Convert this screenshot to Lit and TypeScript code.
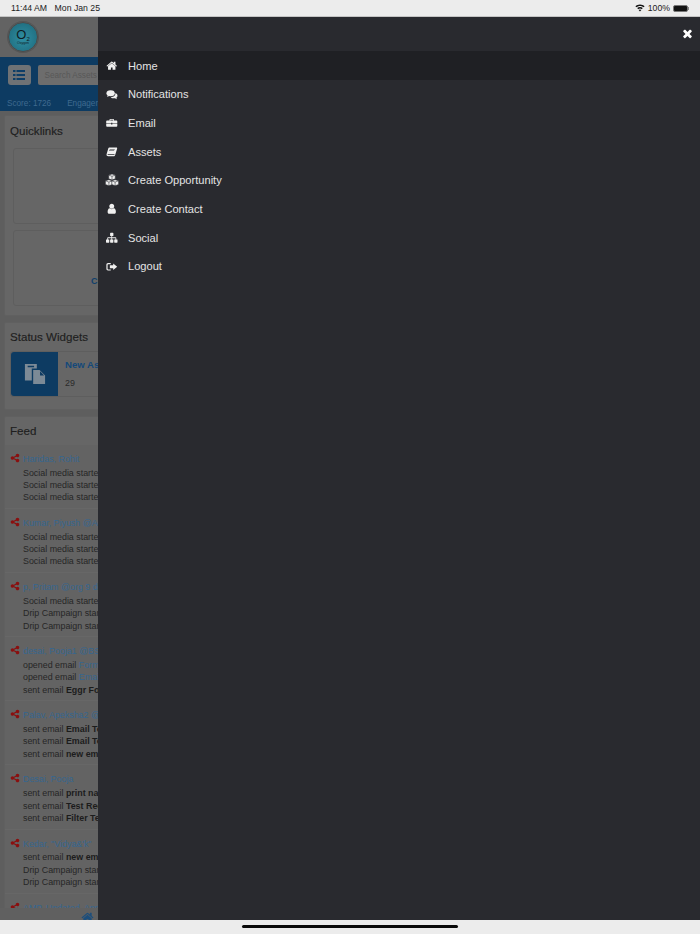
import { LitElement, html, css, svg } from "lit";
import { customElement } from "lit/decorators.js";

const icons: Record<string, any> = {
  home: svg`<path d="M1472 992v480q0 26-19 45t-45 19h-384v-384h-256v384h-384q-26 0-45-19t-19-45v-480q0-1 .5-3t.5-3l575-474 575 474q1 2 1 6zm223-69l-62 74q-8 9-21 11h-3q-13 0-21-7l-692-577-692 577q-12 8-24 7-13-2-21-11l-62-74q-8-10-7-23.500t11-21.500l719-599q32-26 76-26t76 26l244 204v-195q0-14 9-23t23-9h192q14 0 23 9t9 23v408l219 182q10 8 11 21.500t-7 23.500z"/>`,
  comments: svg`<ellipse cx="720" cy="650" rx="650" ry="470"/><path d="M300 950l-130 290 400-170z"/><path d="M1440 640c220 70 350 230 350 410 0 130-70 240-180 320l90 230-300-160c-60 15-120 20-190 20-200 0-380-70-480-190 420 20 800-230 710-630z"/>`,
  briefcase: svg`<path fill-rule="evenodd" d="M640 320h512c50 0 96 44 96 96v130h384c70 0 128 58 128 128v300H992v-70H800v70H32V674c0-70 58-128 128-128h384V416c0-52 46-96 96-96zm32 110v116h448V430zM32 1060h768v100h192v-100h768v340c0 70-58 128-128 128H160c-70 0-128-58-128-128z"/>`,
  book: svg`<path fill-rule="evenodd" d="M520 220h1080c110 0 170 90 130 190l-300 1000c-40 130-120 190-240 190H330c-150 0-260-100-250-260 0-50 10-90 30-150l270-860c20-70 70-110 140-110zm60 240l-30 100h800l30-100zm-90 230l-30 100h800l30-100zM260 1290c-30 90 30 130 100 130h900c30 0 50-10 60-40l30-90z"/>`,
  cubes: svg`<g stroke="#292a2f" stroke-width="70" stroke-linejoin="round"><path d="M896 120l420 150v470l-420 160-420-160V270z"/><path d="M500 850l420 150v470l-420 170-450-170V1000z"/><path d="M1292 850l450 150v470l-450 170-420-170V1000z"/><path fill="none" d="M476 270l420 150 420-150M896 420v480M50 1000l450 160 420-160M500 1160v480M872 1000l420 160 450-160M1292 1160v480"/></g>`,
  user: svg`<path d="M1536 1399q0 109-62.500 187t-150.500 78h-854q-88 0-150.500-78t-62.500-187q0-85 8.500-160.500t31.500-152 58.500-131 94-89 134.500-34.500q131 128 313 128t313-128q76 0 134.500 34.500t94 89 58.500 131 31.500 152 8.500 160.500zm-256-887q0 159-112.500 271.500t-271.500 112.500-271.500-112.500-112.500-271.500 112.500-271.500 271.500-112.500 271.500 112.500 112.500 271.500z"/>`,
  sitemap: svg`<path d="M1792 1248v320q0 40-28 68t-68 28h-320q-40 0-68-28t-28-68v-320q0-40 28-68t68-28h96v-192h-512v192h96q40 0 68 28t28 68v320q0 40-28 68t-68 28h-320q-40 0-68-28t-28-68v-320q0-40 28-68t68-28h96v-192h-512v192h96q40 0 68 28t28 68v320q0 40-28 68t-68 28h-320q-40 0-68-28t-28-68v-320q0-40 28-68t68-28h96v-192q0-52 38-90t90-38h512v-192h-96q-40 0-68-28t-28-68v-320q0-40 28-68t68-28h320q40 0 68 28t28 68v320q0 40-28 68t-68 28h-96v192h512q52 0 90 38t38 90v192h96q40 0 68 28t28 68z"/>`,
  logout: svg`<path fill-rule="evenodd" d="M320 320h420v170H340c-50 0-90 40-90 90v640c0 50 40 90 90 90h400v170H320c-160 0-260-110-260-260V580c0-150 100-260 260-260z"/><path d="M1120 380l620 520-620 520v-300H600V680h520z"/>`,
  close: svg`<path d="M1490 1322q0 40-28 68l-136 136q-28 28-68 28t-68-28l-294-294-294 294q-28 28-68 28t-68-28l-136-136q-28-28-28-68t28-68l294-294-294-294q-28-28-28-68t28-68l136-136q28-28 68-28t68 28l294 294 294-294q28-28 68-28t68 28l136 136q28 28 28 68t-28 68l-294 294 294 294q28 28 28 68z"/>`,
  share: svg`<path d="M1344 1024q133 0 226.500 93.500t93.500 226.500-93.500 226.500-226.500 93.500-226.500-93.500-93.500-226.500q0-12 2-34l-360-180q-92 86-218 86-133 0-226.500-93.500t-93.500-226.500 93.500-226.500 226.500-93.500q126 0 218 86l360-180q-2-22-2-34 0-133 93.500-226.500t226.500-93.500 226.500 93.500 93.500 226.500-93.500 226.500-226.500 93.500q-126 0-218-86l-360 180q2 22 2 34t-2 34l360 180q92-86 218-86z"/>`,
};
const icon = (n: string, cls = "") => html`<svg class="ic ${cls}" viewBox="0 0 1792 1792" fill="currentColor">${icons[n]}</svg>`;

const menu = [
  ["home", "Home"], ["comments", "Notifications"], ["briefcase", "Email"], ["book", "Assets"],
  ["cubes", "Create Opportunity"], ["user", "Create Contact"], ["sitemap", "Social"], ["logout", "Logout"],
];
const b = (s: string) => html`<b>${s}</b>`;
const a = (s: string) => html`<span class="lnk">${s}</span>`;
const feed: [string, any[]][] = [
  ["Haridas, Rohit", ["Social media started", "Social media started", "Social media started"]],
  ["Kumar, Piyush @Agile", ["Social media started", "Social media started", "Social media started"]],
  ["p, Pritam @org 9 demo", ["Social media started", "Drip Campaign started", "Drip Campaign started"]],
  ["desai, Pooja1 @BSE", [html`opened email ${a("Form")}`, html`opened email ${a("Email")}`, html`sent email ${b("Eggr Form")}`]],
  ["Palav, Apeksha2 @org", [html`sent email ${b("Email Test")}`, html`sent email ${b("Email Test")}`, html`sent email ${b("new email")}`]],
  ["Desai, Pooja", [html`sent email ${b("print name")}`, html`sent email ${b("Test Record")}`, html`sent email ${b("Filter Test")}`]],
  ['Kedar, "Vidya&\'k"', [html`sent email ${b("new email")}`, "Drip Campaign started", "Drip Campaign started"]],
  ["AMP, Updated, Anna", []],
];

@customElement("app-root")
export class AppRoot extends LitElement {
  static styles = css`
    :host { display: flex; flex-direction: column; width: 700px; height: 934px; overflow: hidden; font-family: "Liberation Sans", Arial, sans-serif; background: #ececec; }
    .status { height: 17px; flex: none; background: #ececec; border-bottom: 1px solid #c4c4c4; display: flex; align-items: center; justify-content: space-between; padding: 0 11px; box-sizing: border-box; font-size: 8.7px; color: #222; }
    .status .l { display: flex; gap: 7.5px; }
    .status .r { display: flex; align-items: center; gap: 2.5px; }
    .batt { width: 15px; height: 7px; border: 1px solid #777; border-radius: 2px; box-sizing: border-box; background: #111; }
    .nub { width: 1px; height: 3px; background: #888; margin-left: -2px; }
    .main { flex: 1; display: flex; min-height: 0; }
    .page { width: 98px; flex: none; background: #5e5e5e; overflow: hidden; position: relative; display: flex; flex-direction: column; white-space: nowrap; }
    .top { height: 40px; flex: none; background: #636363; display: flex; align-items: center; padding-left: 8px; }
    .logo { width: 30px; height: 30px; border-radius: 50%; background: radial-gradient(circle at 50% 55%, #2f8ea3, #1c6677); border: 1px solid #4a4a4a; box-sizing: border-box; box-shadow: 0 0 0 1px #555; display: flex; flex-direction: column; align-items: center; justify-content: center; color: #0f1d24; line-height: 1; }
    .logo .o { font-size: 13px; }
    .logo sub { font-size: 6px; vertical-align: -2px; line-height: 0; }
    .logo .x { font-size: 3.5px; margin-top: 1px; }
    .bar { height: 38px; flex: none; background: #0d3b62; display: flex; align-items: center; gap: 7px; padding: 0 0 1.500px 7.500px; box-sizing: border-box; }
    .btn { width: 23px; height: 20px; flex: none; background: #6f7275; border-radius: 3px; color: #0e3e67; display: flex; align-items: center; justify-content: center; }
    .btn svg { width: 12px; height: 10px; }
    .search { width: 100px; height: 20px; flex: none; background: #6d6d6d; border-radius: 2px; font-size: 8.2px; color: #585858; display: flex; align-items: center; padding-left: 7px; box-sizing: border-box; }
    .score { height: 16px; flex: none; background: #0d3b62; font-size: 8.2px; color: #3f6a8f; display: flex; align-items: center; gap: 16px; padding-left: 7px; }
    .panel { margin: 0 -40px 6px 4px; background: #666; border-radius: 2px; flex: none; border: 1px solid #606060; box-sizing: border-box; }
    .title { font-size: 11.6px; line-height: 13px; color: #1e1e1e; padding: 0 5px; -webkit-text-stroke: 0.15px #1e1e1e; }
    .q { height: 201px; margin-top: 4px; padding-top: 8px; box-sizing: border-box; }
    .qbox { height: 76px; margin: 6px 0 6px 8px; border: 1px solid #5e5e5e; border-radius: 3px; box-sizing: border-box; position: relative; font-size: 9px; color: #0f3f6c; font-weight: bold; }
    .qbox.first { margin-top: 11px; }
    .qc { position: absolute; left: 77px; top: 45px; }
    .s { height: 88px; padding-top: 7px; box-sizing: border-box; }
    .card { display: flex; margin: 8px 0 0 5px; height: 46px; border: 1px solid #5e5e5e; border-radius: 3px; box-sizing: border-box; }
    .blue { width: 47px; flex: none; background: #0d3b62; border-radius: 3px 0 0 3px; color: #7c8a96; display: flex; align-items: center; justify-content: center; }
    .blue svg { width: 22px; height: 22px; }
    .ctxt { padding: 7px; font-size: 9.6px; line-height: 11px; color: #14497a; font-weight: bold; }
    .ctxt div { font-size: 8.9px; line-height: 10px; color: #2a2a2a; font-weight: normal; margin-top: 8px; }
    .f { flex: 1; padding-top: 7px; margin-bottom: 0; min-height: 0; overflow: hidden; }
    .f .title { margin-bottom: 8px; }
    .item { height: 64.1px; padding: 8px 0 0 5px; box-sizing: border-box; background: #636363; border-bottom: 1px solid #676767; display: flex; gap: 3px; font-size: 8.9px; line-height: 12.3px; color: #262626; }
    .item .ic { width: 10px; height: 10px; flex: none; color: #8a0f0f; margin-top: 0; }
    .name { color: #36668f; margin-bottom: 1.5px; }
    .lnk { color: #36668f; }
    .item b { color: #1c1c1c; }
    .foot { position: absolute; left: 0; right: 0; bottom: 0; height: 12px; background: #606060; color: #1c4e7c; overflow: hidden; }
    .foot .ic { position: absolute; left: 81px; top: 3px; width: 13px; height: 13px; }
    .drawer { flex: 1; background: #292a2f; display: flex; flex-direction: column; }
    .dh { height: 34.3px; flex: none; display: flex; justify-content: flex-end; padding: 10px 6px 0 0; box-sizing: border-box; color: #fff; }
    .dh .ic { width: 13px; height: 13px; }
    .row { height: 28.7px; flex: none; display: flex; align-items: center; color: #e4e4e4; font-size: 11.1px; padding-left: 8px; }
    .row.on { background: #1f2024; }
    .row .ic { width: 11.5px; height: 11.5px; margin-right: 10.5px; color: #f0f0f0; flex: none; }
    .row .ic.big { width: 14px; height: 14px; margin: 0 9px 0 -1px; }
    .bottom { height: 14px; flex: none; background: #ececec; display: flex; justify-content: center; padding-top: 5px; box-sizing: border-box; }
    .ind { width: 216px; height: 3px; border-radius: 2px; background: #0a0a0a; }
  `;
  render() {
    return html`
      <div class="status">
        <div class="l"><span>11:44 AM</span><span>Mon Jan 25</span></div>
        <div class="r">
          <svg width="10" height="8" viewBox="0 0 24 20" fill="#111"><path d="M12 1C7.500 1 3.500 2.800.5 5.700l2.600 2.700C5.400 6.100 8.500 4.800 12 4.800s6.600 1.300 8.900 3.600l2.600-2.700C20.500 2.800 16.500 1 12 1zM5 10.300l2.600 2.700c1.200-1.100 2.700-1.800 4.400-1.800s3.200.7 4.400 1.800l2.600-2.700C17.200 8.500 14.700 7.400 12 7.400s-5.200 1.100-7 2.900zM8.700 14.800L12 18.500l3.300-3.700c-.9-.8-2-1.300-3.300-1.300s-2.400.5-3.300 1.300z"/></svg>
          <span>100%</span><span class="batt"></span><span class="nub"></span>
        </div>
      </div>
      <div class="main">
        <div class="page">
          <div class="top"><div class="logo"><span class="o">O<sub>2</sub></span><span class="x">Oxygen</span></div></div>
          <div class="bar"><div class="btn"><svg viewBox="0 0 12 10" fill="currentColor"><path d="M0 0h2.500v2H0zM3.500 0H12v2H3.500zM0 4h2.500v2H0zM3.500 4H12v2H3.500zM0 8h2.500v2H0zM3.500 8H12v2H3.500z"/></svg></div><div class="search">Search Assets</div></div>
          <div class="score"><span>Score: 1726</span><span>Engagement</span></div>
          <div class="panel q"><div class="title">Quicklinks</div><div class="qbox first"></div><div class="qbox"><span class="qc">C</span></div></div>
          <div class="panel s"><div class="title">Status Widgets</div>
            <div class="card"><div class="blue"><svg viewBox="0 0 24 24" fill="currentColor"><path fill-rule="evenodd" d="M1 1h13v5H8.500v13H1zM4 3v1.500h7V3zM10 7.500h7l6 6V23H10zM17.500 9v4.500H22z"/></svg></div><div class="ctxt">New Assets<div>29</div></div></div>
          </div>
          <div class="panel f"><div class="title">Feed</div>
            ${feed.map(([n, ls]) => html`<div class="item">${icon("share")}<div><div class="name">${n}</div>${ls.map((l) => html`<div>${l}</div>`)}</div></div>`)}
          </div>
          <div class="foot">${icon("home")}</div>
        </div>
        <div class="drawer">
          <div class="dh">${icon("close")}</div>
          ${menu.map(([i, t], k) => html`<div class="row ${k === 0 ? "on" : ""}">${icon(i, i === "cubes" ? "big" : "")}<span>${t}</span></div>`)}
        </div>
      </div>
      <div class="bottom"><div class="ind"></div></div>
    `;
  }
}
